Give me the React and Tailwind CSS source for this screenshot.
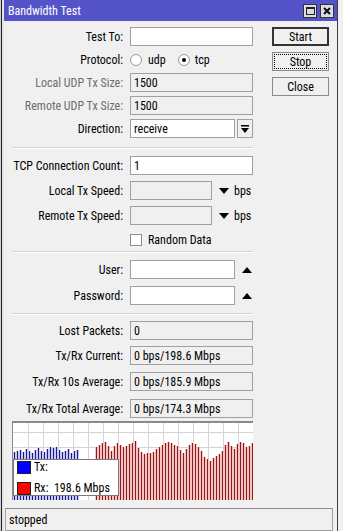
import React from 'react';

const redTops = [
  26, 24, 22, 21, 25, 30,
  25, 22, 24, 26, 25, 23, 22, 20,
  27, 31, 33, 32, 32, 31, 28,
  26, 24, 22, 21, 22, 24, 25,
  29, 32, 28, 24, 22, 23, 26,
  30, 36, 38, 40, 37, 35, 33, 30,
  24, 21, 25, 28, 23, 21, 22, 26, 25, 22,
];

const blueTops = [31, 30, 29, 31, 28, 30, 32, 29, 27, 30, 31, 28, 26, 27, 26, 29, 31, 30, 28, 32, 30, 29];

const Label = ({ children, dim }) => (
  <div className={`w-[111px] shrink-0 text-right whitespace-nowrap ${dim ? 'text-[#6d6d6d]' : 'text-black'}`}>{children}</div>
);

const Field = ({ value, w = 'w-[123px]', ro }) => (
  <div
    className={`${w} h-[19px] shrink-0 border border-[#a0a0a0] flex items-center pl-[3px] whitespace-nowrap ${ro ? 'bg-[#f0f0f0]' : 'bg-white'}`}
  >
    {value}
  </div>
);

const Separator = ({ mt }) => (
  <div className={`${mt} w-[241px] border-t border-[#d4d4d4] border-b border-b-white`} />
);

const Radio = ({ checked }) => (
  <span className="w-[12px] h-[12px] rounded-full border border-[#9a9a9a] bg-white flex items-center justify-center">
    {checked && <span className="w-[4px] h-[4px] rounded-full bg-black" />}
  </span>
);

const DownTri = () => (
  <svg width="10" height="6" viewBox="0 0 10 6" className="shrink-0">
    <path d="M0 0 L10 0 L5 6 Z" fill="#000" />
  </svg>
);

const UpTri = () => (
  <svg width="10" height="6" viewBox="0 0 10 6" className="shrink-0">
    <path d="M0 6 L10 6 L5 0 Z" fill="#000" />
  </svg>
);

const Chart = () => {
  const W = 241;
  const H = 79;
  return (
    <div className="relative mt-[3px] w-[241px] h-[79px]">
      <svg width={W} height={H} viewBox={`0 0 ${W} ${H}`} className="block">
        <rect x="0" y="0" width={W} height={H} fill="#fff" />
        {Array.from({ length: 16 }).map((_, i) => (
          <line key={'v' + i} x1={16.5 + i * 15} y1="0" x2={16.5 + i * 15} y2={H} stroke="#d4d4d4" />
        ))}
        {[11, 26, 41, 56, 71].map((y) => (
          <line key={'h' + y} x1="0" y1={y + 0.5} x2={W} y2={y + 0.5} stroke="#d4d4d4" />
        ))}
        {blueTops.map((t, i) => (
          <g key={'b' + i}>
            <rect x={1 + i * 3} y={t} width="3" height={H - t} fill="#c8c8f0" />
            <rect x={2 + i * 3} y={t} width="1" height={H - t} fill="#1a1a8c" />
          </g>
        ))}
        {redTops.map((t, i) => (
          <g key={'r' + i}>
            <rect x={83 + i * 3} y={t} width="3" height={H - t} fill="#f4c4c4" />
            <rect x={84 + i * 3} y={t} width="1" height={H - t} fill="#8c1c1c" />
          </g>
        ))}
        <rect x="0" y="0" width={W} height="2" fill="#8a8a8a" />
        <rect x="0" y="0" width="1" height={H} fill="#8a8a8a" />
      </svg>
      <div className="absolute left-[1px] top-[38px] w-[106px] h-[37px] bg-white border border-[#7a7a7a] flex flex-col justify-center gap-[3px] pl-[3px]">
        <div className="flex items-center gap-[3px]">
          <span className="w-[14px] h-[13px] bg-[#0000ff] border border-[#202020]" />
          <span>Tx:</span>
        </div>
        <div className="flex items-center gap-[3px]">
          <span className="w-[14px] h-[13px] bg-[#ff0000] border border-[#202020]" />
          <span className="whitespace-pre">Rx:  198.6 Mbps</span>
        </div>
      </div>
    </div>
  );
};

const Btn = ({ children, kind }) => {
  if (kind === 'default')
    return (
      <div className="w-[57px] h-[19px] border-2 border-[#333] bg-[#f0f0f0] flex items-center justify-center">
        {children}
      </div>
    );
  if (kind === 'focus')
    return (
      <div className="w-[57px] h-[19px] border border-[#8a8a8a] bg-[#f0f0f0] p-[1px]">
        <div className="w-full h-full border border-dotted border-black flex items-center justify-center">
          {children}
        </div>
      </div>
    );
  return (
    <div className="w-[57px] h-[19px] border border-[#8a8a8a] bg-[#f0f0f0] flex items-center justify-center">
      {children}
    </div>
  );
};

export default function App() {
  return (
    <div className="w-[343px] h-[531px] overflow-hidden flex bg-[#f0f0f0] font-['Roboto_Condensed','Liberation_Sans',sans-serif] text-[12px] text-black">
      {/* strip of the window behind */}
      <div className="w-[4px] h-full flex">
        <div className="w-[1px] bg-[#d0d0d0]" />
        <div className="w-[1px] bg-[#222]" />
        <div className="w-[2px] bg-[#e4e4e4]" />
      </div>

      <div className="w-[334px] h-full flex flex-col bg-[#f0f0f0] border-r border-[#3a3a3a]">
        {/* title bar */}
        <div className="h-[21px] bg-[#5454c8] flex items-center pl-[4px] pr-[3px]">
          <span className="text-white text-[12px] flex-1">Bandwidth Test</span>
          <div className="flex gap-[3px]">
            <div className="w-[14px] h-[14px] bg-[#dcdce4] border border-[#333] flex items-center justify-center">
              <span className="w-[9px] h-[8px] border border-[#222] border-t-2" />
            </div>
            <div className="w-[14px] h-[14px] bg-[#dcdce4] border border-[#333] flex items-center justify-center">
              <svg width="8" height="8" viewBox="0 0 8 8">
                <path d="M1 1 L7 7 M7 1 L1 7" stroke="#111" strokeWidth="2" />
              </svg>
            </div>
          </div>
        </div>

        {/* body */}
        <div className="flex-1 flex pl-[8px]">
          <div className="w-[241px] flex flex-col pt-[6px]">
            <div className="flex items-center gap-[7px] h-[19px]">
              <Label>Test To:</Label>
              <Field value="" />
            </div>
            <div className="flex items-center gap-[7px] h-[19px] mt-[4px]">
              <Label>Protocol:</Label>
              <div className="flex items-center">
                <Radio />
                <span className="ml-[6px]">udp</span>
                <span className="ml-[12px]"><Radio checked /></span>
                <span className="ml-[5px]">tcp</span>
              </div>
            </div>
            <div className="flex items-center gap-[7px] h-[19px] mt-[4px]">
              <Label dim>Local UDP Tx Size:</Label>
              <Field value="1500" ro />
            </div>
            <div className="flex items-center gap-[7px] h-[19px] mt-[4px]">
              <Label dim>Remote UDP Tx Size:</Label>
              <Field value="1500" ro />
            </div>
            <div className="flex items-center gap-[7px] h-[19px] mt-[4px]">
              <Label>Direction:</Label>
              <div className="flex items-center gap-[2px]">
                <Field value="receive" w="w-[105px]" />
                <div className="w-[16px] h-[19px] border border-[#a0a0a0] bg-[#f0f0f0] flex items-center justify-center">
                  <svg width="8" height="8" viewBox="0 0 8 8">
                    <rect x="0" y="0" width="8" height="1.5" fill="#000" />
                    <path d="M0 3 L8 3 L4 8 Z" fill="#000" />
                  </svg>
                </div>
              </div>
            </div>

            <Separator mt="mt-[9px]" />

            <div className="flex items-center gap-[7px] h-[19px] mt-[7px]">
              <Label>TCP Connection Count:</Label>
              <Field value="1" />
            </div>
            <div className="flex items-center gap-[7px] h-[19px] mt-[6px]">
              <Label>Local Tx Speed:</Label>
              <Field value="" w="w-[82px]" ro />
              <DownTri />
              <span className="ml-[-2px]">bps</span>
            </div>
            <div className="flex items-center gap-[7px] h-[19px] mt-[6px]">
              <Label>Remote Tx Speed:</Label>
              <Field value="" w="w-[82px]" ro />
              <DownTri />
              <span className="ml-[-2px]">bps</span>
            </div>
            <div className="flex items-center h-[19px] mt-[5px] pl-[118px]">
              <span className="w-[12px] h-[12px] border border-[#8a8a8a] bg-white" />
              <span className="ml-[6px]">Random Data</span>
            </div>

            <Separator mt="mt-[2px]" />

            <div className="flex items-center gap-[7px] h-[19px] mt-[7px]">
              <Label>User:</Label>
              <Field value="" w="w-[105px]" />
              <UpTri />
            </div>
            <div className="flex items-center gap-[7px] h-[19px] mt-[7px]">
              <Label>Password:</Label>
              <Field value="" w="w-[105px]" />
              <UpTri />
            </div>

            <Separator mt="mt-[8px]" />

            <div className="flex items-center gap-[7px] h-[19px] mt-[6px]">
              <Label>Lost Packets:</Label>
              <Field value="0" ro />
            </div>
            <div className="flex items-center gap-[7px] h-[19px] mt-[6px]">
              <Label>Tx/Rx Current:</Label>
              <Field value="0 bps/198.6 Mbps" ro />
            </div>
            <div className="flex items-center gap-[7px] h-[19px] mt-[7px]">
              <Label>Tx/Rx 10s Average:</Label>
              <Field value="0 bps/185.9 Mbps" ro />
            </div>
            <div className="flex items-center gap-[7px] h-[19px] mt-[8px]">
              <Label>Tx/Rx Total Average:</Label>
              <Field value="0 bps/174.3 Mbps" ro />
            </div>

            <Chart />
          </div>

          <div className="ml-[19px] pt-[6px] flex flex-col gap-[6px]">
            <Btn kind="default">Start</Btn>
            <Btn kind="focus">Stop</Btn>
            <Btn>Close</Btn>
          </div>
        </div>

        {/* status bar */}
        <div className="h-[26px] pl-[1px] pr-[4px] pt-[3px]">
          <div className="h-[23px] border border-[#a0a0a0] border-t-[#8a8a8a] flex items-center pl-[3px]">
            stopped
          </div>
        </div>
      </div>
    </div>
  );
}
